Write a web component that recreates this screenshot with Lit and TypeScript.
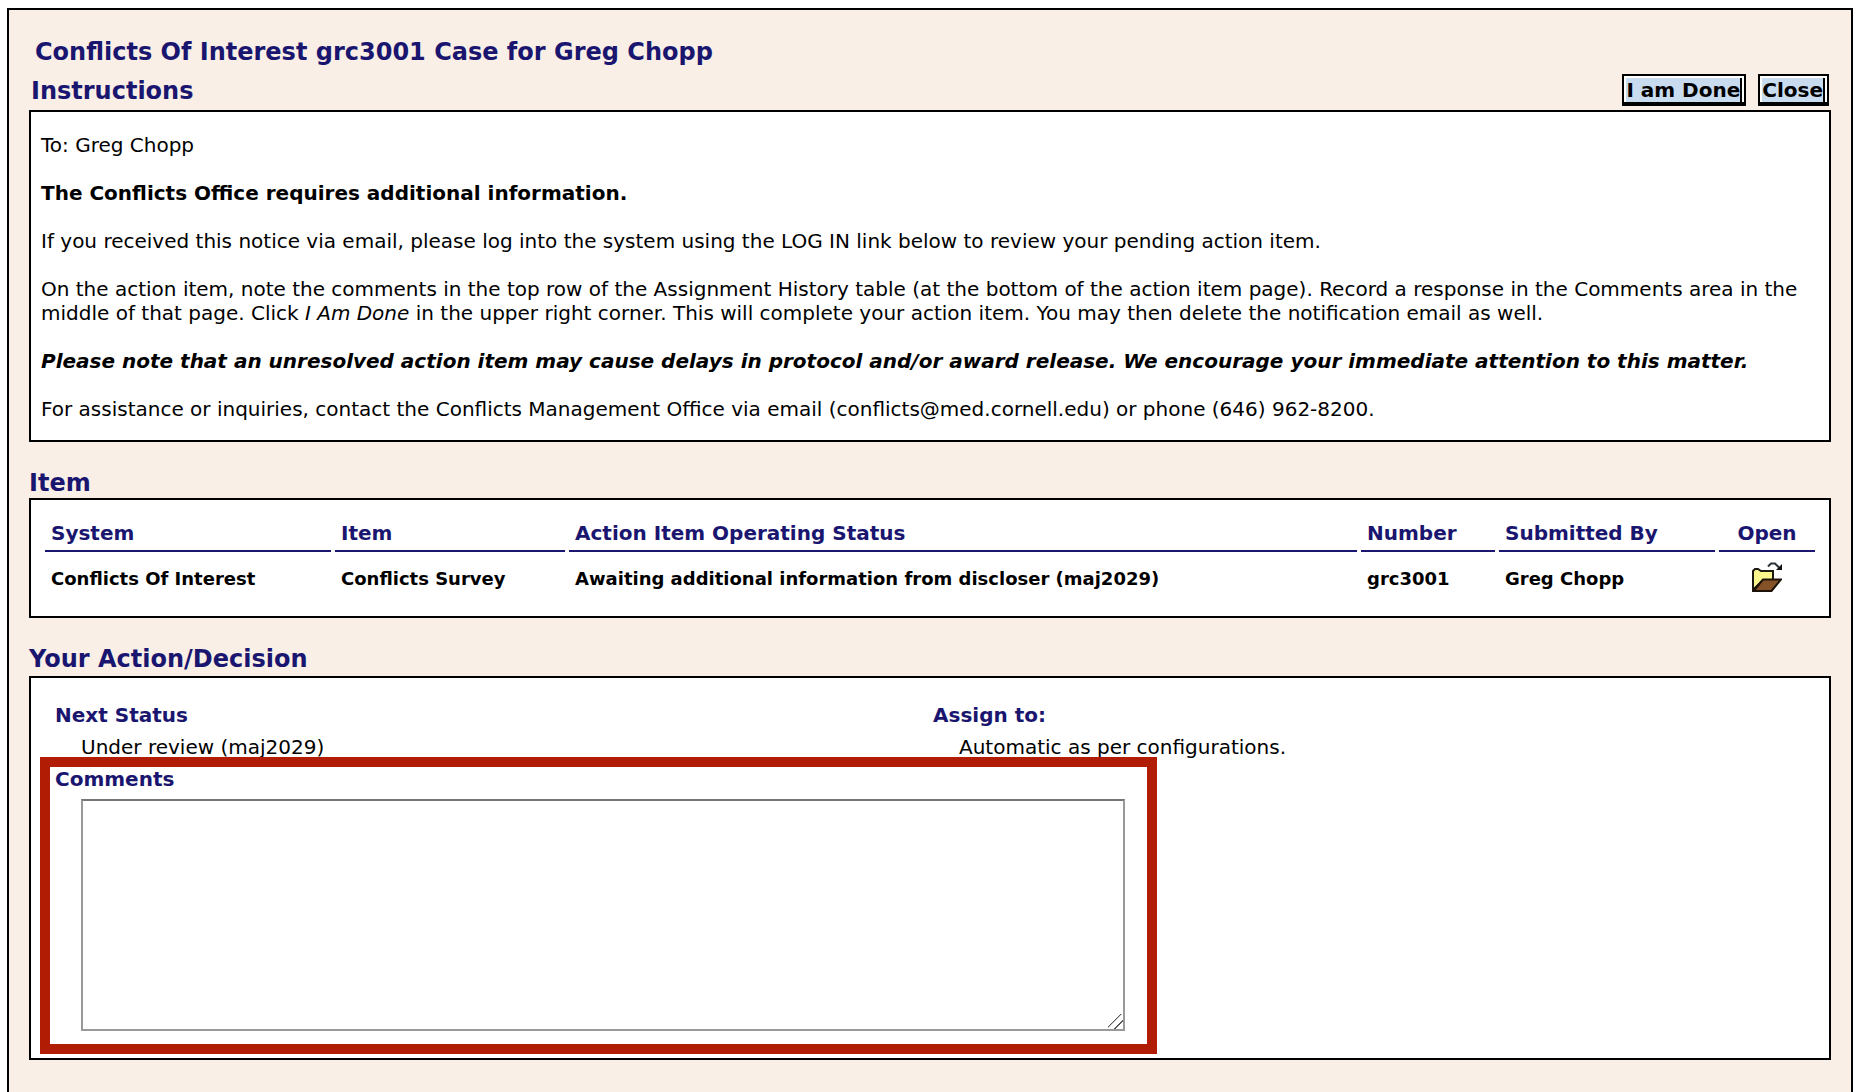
import { LitElement, html, css } from "lit";
import { customElement, state } from "lit/decorators.js";

interface CaseItem {
  system: string;
  item: string;
  status: string;
  number: string;
  submittedBy: string;
}

@customElement("open-folder-icon")
class OpenFolderIcon extends LitElement {
  static styles = css`
    :host {
      display: block;
      width: 30px;
      height: 30px;
    }
    .icon {
      display: block;
      width: 100%;
      height: 100%;
    }
  `;

  render() {
    return html`
      <svg class="icon" viewBox="0 0 30 30" aria-hidden="true">
        <path d="M1 29V9l2-2h3l3 2h12v9H11L1 28z" fill="#fbf68c" stroke="#1c1a10" stroke-width="2" />
        <path d="M1.5 29 11 17.5h18L19.500 29z" fill="#855126" stroke="#1c1208" stroke-width="2" />
        <path d="M16 4.500l3-3h4l4 4" fill="none" stroke="#2c3338" stroke-width="2" />
        <path d="M30 2v6h-6z" fill="#111" />
      </svg>
    `;
  }
}

@customElement("app-root")
class AppRoot extends LitElement {
  static styles = css`
    :host {
      display: block;
      box-sizing: border-box;
      min-height: 100vh;
      padding: 8px 9px 0 7px;
      background: #fff;
      color: #000;
      font: 20px/24px Verdana, "DejaVu Sans", sans-serif;
    }
    * {
      box-sizing: border-box;
    }
    .page {
      min-height: calc(100vh - 8px);
      padding: 27px 20px 32px;
      border: 2px solid #000;
      border-bottom: 0;
      background: #f9efe6;
    }
    h1,
    h2,
    h3,
    p {
      margin: 0;
    }
    h1,
    h2 {
      color: #1a1670;
      font-size: 24px;
      line-height: 30px;
    }
    h1 {
      padding-left: 6px;
    }
    h3,
    .label {
      color: #1a1670;
      font-size: 20px;
      font-weight: bold;
      line-height: 32px;
    }
    .bar {
      display: flex;
      justify-content: space-between;
      align-items: flex-end;
      padding: 7px 2px 4px;
    }
    .actions {
      display: flex;
      gap: 12px;
    }
    .action {
      height: 32px;
      padding: 0 4px 0 2px;
      border: 2px solid #000;
      border-radius: 0;
      background: #c9dbee;
      box-shadow:
        inset 0 -2px #000,
        inset 2px 2px #fff,
        inset -2px 0 #fff,
        inset -4px 0 #000;
      color: #000;
      font: bold 20px/24px Verdana, "DejaVu Sans", sans-serif;
      cursor: pointer;
    }
    .box {
      border: 2px solid #000;
      background: #fff;
    }
    .section {
      margin-top: 26px;
    }
    .instructions {
      display: grid;
      gap: 24px;
      padding: 21px 10px 19px;
    }
    .urgent {
      font-style: italic;
      font-weight: bold;
    }
    .items {
      padding: 14px 10px 16px;
    }
    table {
      width: 100%;
      border-collapse: separate;
      border-spacing: 4px 0;
      table-layout: fixed;
      text-align: left;
    }
    th {
      height: 38px;
      padding: 7px 6px 0;
      border-bottom: 2px solid #1a1670;
      color: #1a1670;
      vertical-align: top;
    }
    td {
      height: 48px;
      padding: 15px 6px 0;
      font-size: 18px;
      font-weight: bold;
      vertical-align: top;
    }
    .system {
      width: 286px;
    }
    .item {
      width: 230px;
    }
    .number {
      width: 134px;
    }
    .submitted {
      width: 216px;
    }
    .open {
      width: 96px;
      text-align: center;
    }
    td.open {
      padding-top: 10px;
    }
    .open-link {
      display: inline-block;
      vertical-align: top;
    }
    .decision-title {
      padding-bottom: 2px;
    }
    .decision {
      padding: 21px 18px 27px 24px;
    }
    .pair {
      display: grid;
      grid-template-columns: 1fr 1fr;
    }
    .value {
      padding-left: 26px;
      line-height: 32px;
    }
    .comments {
      position: relative;
      width: 1070px;
      max-width: 100%;
    }
    .label {
      display: block;
    }
    .entry {
      padding: 4px 0 0 26px;
    }
    textarea {
      display: block;
      width: 100%;
      height: 232px;
      border: 2px solid #999;
      border-top-color: #767676;
      border-radius: 0;
      background: #fff;
      font: inherit;
      outline: none;
    }
    textarea::-webkit-resizer {
      background: linear-gradient(
        135deg,
        transparent 40%,
        #555 41%,
        #555 46%,
        transparent 47%,
        transparent 68%,
        #555 69%,
        #555 74%,
        transparent 75%
      );
    }
    .highlight {
      position: absolute;
      inset: -6px -32px -23px -15px;
      border: 10px solid #b01c04;
      pointer-events: none;
    }
  `;

  @state() private comments = "";

  private items: CaseItem[] = [
    {
      system: "Conflicts Of Interest",
      item: "Conflicts Survey",
      status: "Awaiting additional information from discloser (maj2029)",
      number: "grc3001",
      submittedBy: "Greg Chopp",
    },
  ];

  private onComments(e: Event) {
    this.comments = (e.target as HTMLTextAreaElement).value;
  }

  render() {
    return html`
      <main class="page">
        <h1>Conflicts Of Interest grc3001 Case for Greg Chopp</h1>
        <div class="bar">
          <h2>Instructions</h2>
          <div class="actions">
            <button class="action" type="button">I am Done</button>
            <button class="action" type="button">Close</button>
          </div>
        </div>
        <div class="box instructions">
          <p>To: Greg Chopp</p>
          <p><b>The Conflicts Office requires additional information.</b></p>
          <p>
            If you received this notice via email, please log into the system using the LOG IN link
            below to review your pending action item.
          </p>
          <p>
            On the action item, note the comments in the top row of the Assignment History table (at
            the bottom of the action item page). Record a response in the Comments area in the
            middle of that page. Click <i>I Am Done</i> in the upper right corner. This will
            complete your action item. You may then delete the notification email as well.
          </p>
          <p class="urgent">
            Please note that an unresolved action item may cause delays in protocol and/or award
            release. We encourage your immediate attention to this matter.
          </p>
          <p>
            For assistance or inquiries, contact the Conflicts Management Office via email
            (conflicts@med.cornell.edu) or phone (646) 962-8200.
          </p>
        </div>

        <section class="section">
          <h2>Item</h2>
          <div class="box items">
            <table>
              <thead>
                <tr>
                  <th class="system">System</th>
                  <th class="item">Item</th>
                  <th>Action Item Operating Status</th>
                  <th class="number">Number</th>
                  <th class="submitted">Submitted By</th>
                  <th class="open">Open</th>
                </tr>
              </thead>
              <tbody>
                ${this.items.map(
                  (row) => html`
                    <tr>
                      <td>${row.system}</td>
                      <td>${row.item}</td>
                      <td>${row.status}</td>
                      <td>${row.number}</td>
                      <td>${row.submittedBy}</td>
                      <td class="open">
                        <a class="open-link" href="#open" aria-label="Open">
                          <open-folder-icon></open-folder-icon>
                        </a>
                      </td>
                    </tr>
                  `
                )}
              </tbody>
            </table>
          </div>
        </section>

        <section class="section">
          <h2 class="decision-title">Your Action/Decision</h2>
          <div class="box decision">
            <div class="pair">
              <div>
                <h3>Next Status</h3>
                <p class="value">Under review (maj2029)</p>
              </div>
              <div>
                <h3>Assign to:</h3>
                <p class="value">Automatic as per configurations.</p>
              </div>
            </div>
            <div class="comments">
              <label class="label" for="comments">Comments</label>
              <div class="entry">
                <textarea id="comments" .value=${this.comments} @input=${this.onComments}></textarea>
              </div>
              <div class="highlight"></div>
            </div>
          </div>
        </section>
      </main>
    `;
  }
}
